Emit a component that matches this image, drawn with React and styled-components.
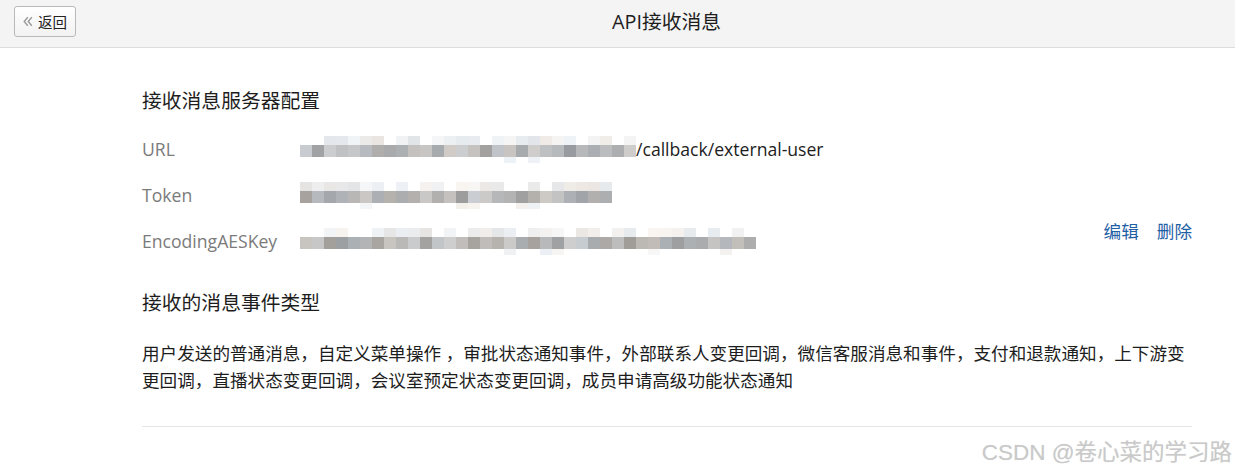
import React from 'react';
import styled, { createGlobalStyle } from 'styled-components';

const GlobalStyle = createGlobalStyle`
  html, body { margin: 0; padding: 0; background: #fff; }
  body {
    font-family: "Open Sans", "Noto Sans CJK SC", sans-serif;
    color: #222;
  }
`;

const Page = styled.div`
  position: relative;
  width: 1235px;
  height: 472px;
  overflow: hidden;
  background: #fff;
`;

const Header = styled.header`
  display: flex;
  align-items: center;
  box-sizing: border-box;
  height: 48px;
  padding: 0 0 4px 14px;
  background: #f4f4f4;
  border-bottom: 1px solid #dcdcdc;
`;

const BackButton = styled.button`
  display: flex;
  align-items: center;
  gap: 5px;
  box-sizing: border-box;
  width: 62px;
  height: 31px;
  padding: 0 0 0 8px;
  border: 1px solid #b9b9b9;
  border-radius: 3px;
  background: linear-gradient(#ffffff, #f2f2f2);
  font-family: "Noto Sans CJK SC", sans-serif;
  font-size: 14.5px;
  color: #222;
  cursor: pointer;
`;

const Title = styled.h1`
  flex: 1;
  margin: 0;
  padding-left: 22px;
  text-align: center;
  font-size: 19.8px;
  font-weight: 400;
  line-height: 28px;
  color: #1d1d1d;
`;

const Main = styled.main`
  width: 1050px;
  margin-left: 142px;
  padding-top: 39px;
`;

const SectionTitle = styled.h2`
  margin: ${p => p.$top || 0}px 0 0;
  font-size: 19.8px;
  font-weight: 400;
  line-height: 28px;
  color: #1d1d1d;
`;

const FieldList = styled.div`
  margin-top: 11px;
  display: flex;
  flex-direction: column;
`;

const Row = styled.div`
  display: flex;
  align-items: center;
  height: 46px;
`;

const Label = styled.div`
  width: 158px;
  flex-shrink: 0;
  font-size: 17.6px;
  line-height: 27px;
  color: #7b7b7b;
`;

const Value = styled.div`
  display: flex;
  align-items: center;
  font-size: 17.6px;
  line-height: 27px;
  color: #1d1d1d;
`;

const Actions = styled.div`
  margin-left: auto;
  align-self: flex-start;
  display: flex;
  gap: 18px;
  font-size: 17.6px;
  line-height: 27px;
`;

const ActionLink = styled.a`
  color: #1f5fa6;
  text-decoration: none;
  cursor: pointer;
`;

const Body = styled.p`
  margin: 23px 0 0;
  font-size: 17.6px;
  line-height: 27px;
  color: #1d1d1d;
`;

const Divider = styled.hr`
  margin: 32px 0 0;
  border: 0;
  border-top: 1px solid #e4e4e4;
`;

const MosaicGrid = styled.div`
  display: grid;
  grid-template-columns: repeat(${p => p.$cols}, 12px);
  grid-template-rows: 9px 12px 6px;
`;

const Cell = styled.span`
  display: block;
`;

const Watermark = styled.div`
  position: absolute;
  right: 3px;
  bottom: 5px;
  font-family: "Liberation Sans", "Noto Sans CJK SC", sans-serif;
  font-size: 22.5px;
  line-height: 28px;
  color: #c9c9c9;
  text-shadow: 0 0 1px #e6e6e6;
`;

function makeRng(seed) {
  let s = seed;
  return () => {
    s = (s * 9301 + 49297) % 233280;
    return s / 233280;
  };
}

function shade(r, lo, hi) {
  const base = Math.round(lo + r() * (hi - lo));
  const t = Math.round((r() - 0.5) * 10);
  return `rgb(${base + t}, ${base}, ${base - t})`;
}

function Mosaic({ cols, seed }) {
  const r = makeRng(seed);
  const cells = [];
  for (let c = 0; c < cols; c++) {
    cells.push({ row: 1, col: c, bg: r() < 0.75 ? shade(r, 228, 246) : 'transparent' });
    cells.push({ row: 2, col: c, bg: shade(r, 155, 208) });
    cells.push({ row: 3, col: c, bg: r() < 0.15 ? shade(r, 238, 248) : 'transparent' });
  }
  return (
    <MosaicGrid $cols={cols}>
      {cells.map((cell, i) => (
        <Cell
          key={i}
          style={{ gridRow: cell.row, gridColumn: cell.col + 1, background: cell.bg }}
        />
      ))}
    </MosaicGrid>
  );
}

const ChevronsLeft = () => (
  <svg width="10" height="11" viewBox="0 0 10 11" fill="none" stroke="#9a9a9a" strokeWidth="1.4">
    <path d="M4.8 1.2 L1.2 5.5 L4.8 9.8 M8.8 1.2 L5.2 5.5 L8.8 9.8" />
  </svg>
);

export default function App() {
  return (
    <Page>
      <GlobalStyle />
      <Header>
        <BackButton>
          <ChevronsLeft />
          返回
        </BackButton>
        <Title>API接收消息</Title>
      </Header>
      <Main>
        <SectionTitle>接收消息服务器配置</SectionTitle>
        <FieldList>
          <Row>
            <Label>URL</Label>
            <Value>
              <Mosaic cols={28} seed={17} />
              /callback/external-user
            </Value>
          </Row>
          <Row>
            <Label>Token</Label>
            <Value>
              <Mosaic cols={26} seed={53} />
            </Value>
          </Row>
          <Row>
            <Label>EncodingAESKey</Label>
            <Value>
              <Mosaic cols={38} seed={91} />
            </Value>
            <Actions>
              <ActionLink>编辑</ActionLink>
              <ActionLink>删除</ActionLink>
            </Actions>
          </Row>
        </FieldList>
        <SectionTitle $top={25}>接收的消息事件类型</SectionTitle>
        <Body>
          用户发送的普通消息，自定义菜单操作 ，审批状态通知事件，外部联系人变更回调，微信客服消息和事件，支付和退款通知，上下游变更回调，直播状态变更回调，会议室预定状态变更回调，成员申请高级功能状态通知
        </Body>
        <Divider />
      </Main>
      <Watermark>CSDN @卷心菜的学习路</Watermark>
    </Page>
  );
}
